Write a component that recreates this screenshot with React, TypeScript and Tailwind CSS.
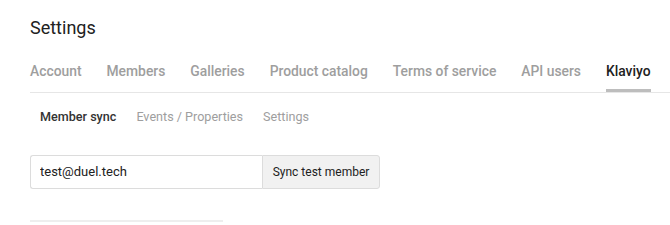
const tabs = ['Account', 'Members', 'Galleries', 'Product catalog', 'Terms of service', 'API users', 'Klaviyo']
const subTabs = ['Member sync', 'Events / Properties', 'Settings']

export default function App() {
  const activeTab = 'Klaviyo'
  const activeSub = 'Member sync'

  return (
    <div className="min-h-[225px] bg-white pl-[30px] pt-[16px] font-['Roboto',sans-serif]">
      <h1 className="text-[18px] leading-6 text-[#212121]">Settings</h1>

      {/* Main tabs */}
      <div className="mt-[21px] flex gap-[25px] border-b border-[#e6e6e6]">
        {tabs.map((tab) => (
          <div
            key={tab}
            className={
              tab === activeTab
                ? 'border-b-[3px] border-[#bdbdbd] pb-2 text-[13.85px] font-medium leading-5 text-[#212121]'
                : 'border-b-[3px] border-transparent pb-2 text-[13.85px] font-medium leading-5 text-[#9e9e9e]'
            }
          >
            {tab}
          </div>
        ))}
      </div>

      {/* Sub tabs */}
      <div className="mt-[15px] flex gap-5 pl-[10px]">
        {subTabs.map((sub) => (
          <div
            key={sub}
            className={
              sub === activeSub
                ? 'text-[12.6px] font-medium leading-[18px] text-[#333333]'
                : 'text-[12.6px] leading-[18px] text-[#9e9e9e]'
            }
          >
            {sub}
          </div>
        ))}
      </div>

      {/* Sync form */}
      <div className="mt-[29px] flex h-[34px] w-[350px]">
        <input
          defaultValue="test@duel.tech"
          className="w-[232px] rounded-l-[3px] border border-r-0 border-[#dcdcdc] bg-white px-[9px] text-[13px] text-[#212121] outline-none"
        />
        <button className="flex-1 rounded-r-[3px] border border-[#dcdcdc] bg-[#f1f1f1] text-[12px] text-[#212121]">
          Sync test member
        </button>
      </div>

      <div className="mt-[31px] h-[2px] w-[193px] bg-[#eeeeee]" />
    </div>
  )
}
